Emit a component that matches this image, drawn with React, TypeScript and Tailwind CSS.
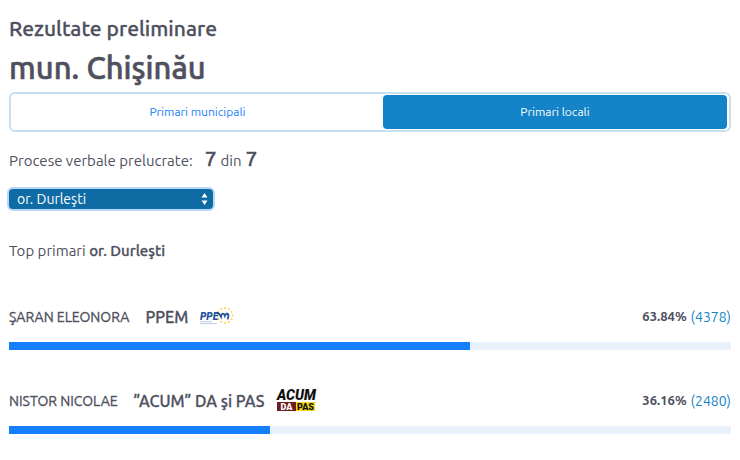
import { useState } from "react";

type Candidate = {
  name: string;
  party: string;
  percent: number;
  votes: number;
  logo: React.ReactNode;
};

function PpemLogo() {
  const stars = Array.from({ length: 12 }, (_, i) => {
    const angle = (i * Math.PI) / 6;
    return { x: 25 + 7.6 * Math.cos(angle), y: 7.5 + 7.4 * Math.sin(angle) };
  });
  return (
    <svg className="h-[18px] w-[34px] overflow-visible" viewBox="0 0 34 18" role="img" aria-label="PPEM">
      {stars.map((s, i) => (
        <circle key={i} cx={s.x} cy={s.y} r="1.1" fill="#fbd765" />
      ))}
      <text x="0" y="12" fontSize="10" fontWeight="900" fontStyle="italic" fill="#22539c" fontFamily="Roboto, sans-serif">
        PPE
      </text>
      <path
        d="M16.5 5.8 C18.5 4.6 20 6.4 21 8.6 C21.6 5 23.8 4.8 24.8 7.8 C26 4.8 28.6 5.2 28.4 8.2 L27.6 11.4"
        fill="none"
        stroke="#22539c"
        strokeWidth="1.8"
      />
      <path d="M0 13.7 H12 M0 15.6 H17" stroke="#a9bedb" strokeWidth="0.8" />
    </svg>
  );
}

function AcumLogo() {
  return (
    <svg className="h-6 w-[38px] overflow-visible" viewBox="0 0 38 24" role="img" aria-label="ACUM DA PAS">
      <rect x="0" y="13" width="19" height="9" fill="#6b1d20" />
      <rect x="19" y="13" width="19" height="9" fill="#f8d516" />
      <text x="0" y="11" fontSize="14" fontWeight="900" fontStyle="italic" fill="#111" fontFamily="Roboto, sans-serif">
        ACUM
      </text>
      <text x="9.5" y="21" textAnchor="middle" fontSize="9" fontWeight="900" fill="#fff" fontFamily="Roboto, sans-serif">
        DA
      </text>
      <text x="28.5" y="21" textAnchor="middle" fontSize="9" fontWeight="900" fill="#111" fontFamily="Roboto, sans-serif">
        PAS
      </text>
    </svg>
  );
}

const candidates: Candidate[] = [
  { name: "ŞARAN ELEONORA", party: "PPEM", percent: 63.84, votes: 4378, logo: <PpemLogo /> },
  { name: "NISTOR NICOLAE", party: "”ACUM” DA şi PAS", percent: 36.16, votes: 2480, logo: <AcumLogo /> },
];

function ResultRow({ name, party, percent, votes, logo }: Candidate) {
  return (
    <li>
      <div className="flex h-7 items-center">
        <span className="text-sm [-webkit-text-stroke:0.3px]">{name}</span>
        <span className="ml-4 text-base font-medium [-webkit-text-stroke:0.3px]">{party}</span>
        <span className="ml-3">{logo}</span>
        <span className="ml-auto text-[13px] font-semibold">{percent}%</span>
        <span className="ml-1 text-sm text-[#1583c7]">({votes})</span>
      </div>
      <div
        className="mt-[11px] h-2 bg-[#e9f2fa]"
        role="progressbar"
        aria-label={name}
        aria-valuenow={percent}
        aria-valuemin={0}
        aria-valuemax={100}
      >
        <div className="h-full bg-[#147efb]" style={{ width: `${percent}%` }} />
      </div>
    </li>
  );
}

export default function App() {
  const [tab, setTab] = useState("local");
  const base = "h-[34px] flex-auto rounded text-xs";
  const active = "bg-[#1583c7] text-white";
  const idle = "text-[#147efb]";
  return (
    <main className="bg-white px-[9px] pt-[14px] font-['Ubuntu','Open_Sans','Noto_Sans',sans-serif] text-[#4e505e]">
      <h2 className="text-[21px] leading-7 font-medium [-webkit-text-stroke:0.3px]">Rezultate preliminare</h2>
      <h1 className="mt-1 mb-0.5 text-[31px] leading-11 font-medium [-webkit-text-stroke:0.6px]">mun. Chişinău</h1>
      <div className="flex rounded-md border-2 border-[#c8def1] p-px pr-0.5">
        <button type="button" className={`${base} ${tab === "municipal" ? active : idle}`} onClick={() => setTab("municipal")}>
          Primari municipali
        </button>
        <button type="button" className={`${base} ${tab === "local" ? active : idle}`} onClick={() => setTab("local")}>
          Primari locali
        </button>
      </div>
      <p className="mt-3 flex items-baseline text-[15px] leading-7">
        Procese verbale prelucrate:
        <b className="ml-3 text-[21px] font-medium [-webkit-text-stroke:0.3px]">7</b>
        <span className="mx-1">din</span>
        <b className="text-[21px] font-medium [-webkit-text-stroke:0.3px]">7</b>
      </p>
      <div className="relative mt-3.5 w-[204px]">
        <select
          aria-label="Localitate"
          className="block h-5 w-full appearance-none rounded bg-[#0e6ba3] pl-2 text-sm leading-5 text-white ring-2 ring-[#b9d9fb] outline-none"
        >
          <option>or. Durleşti</option>
        </select>
        <svg className="pointer-events-none absolute top-1 right-[5px] h-3 w-[7px]" viewBox="0 0 7 12" fill="#fff" aria-hidden="true">
          <path d="M3.5 0 L6.5 4.5 H0.5 Z M3.5 12 L0.5 7.5 H6.5 Z" />
        </svg>
      </div>
      <p className="mt-7 text-[15px] leading-7">
        Top primari <b className="font-medium [-webkit-text-stroke:0.3px]">or. Durleşti</b>
      </p>
      <ul className="mt-[38px] flex flex-col gap-[37px]">
        {candidates.map((c) => (
          <ResultRow key={c.name} {...c} />
        ))}
      </ul>
    </main>
  );
}
